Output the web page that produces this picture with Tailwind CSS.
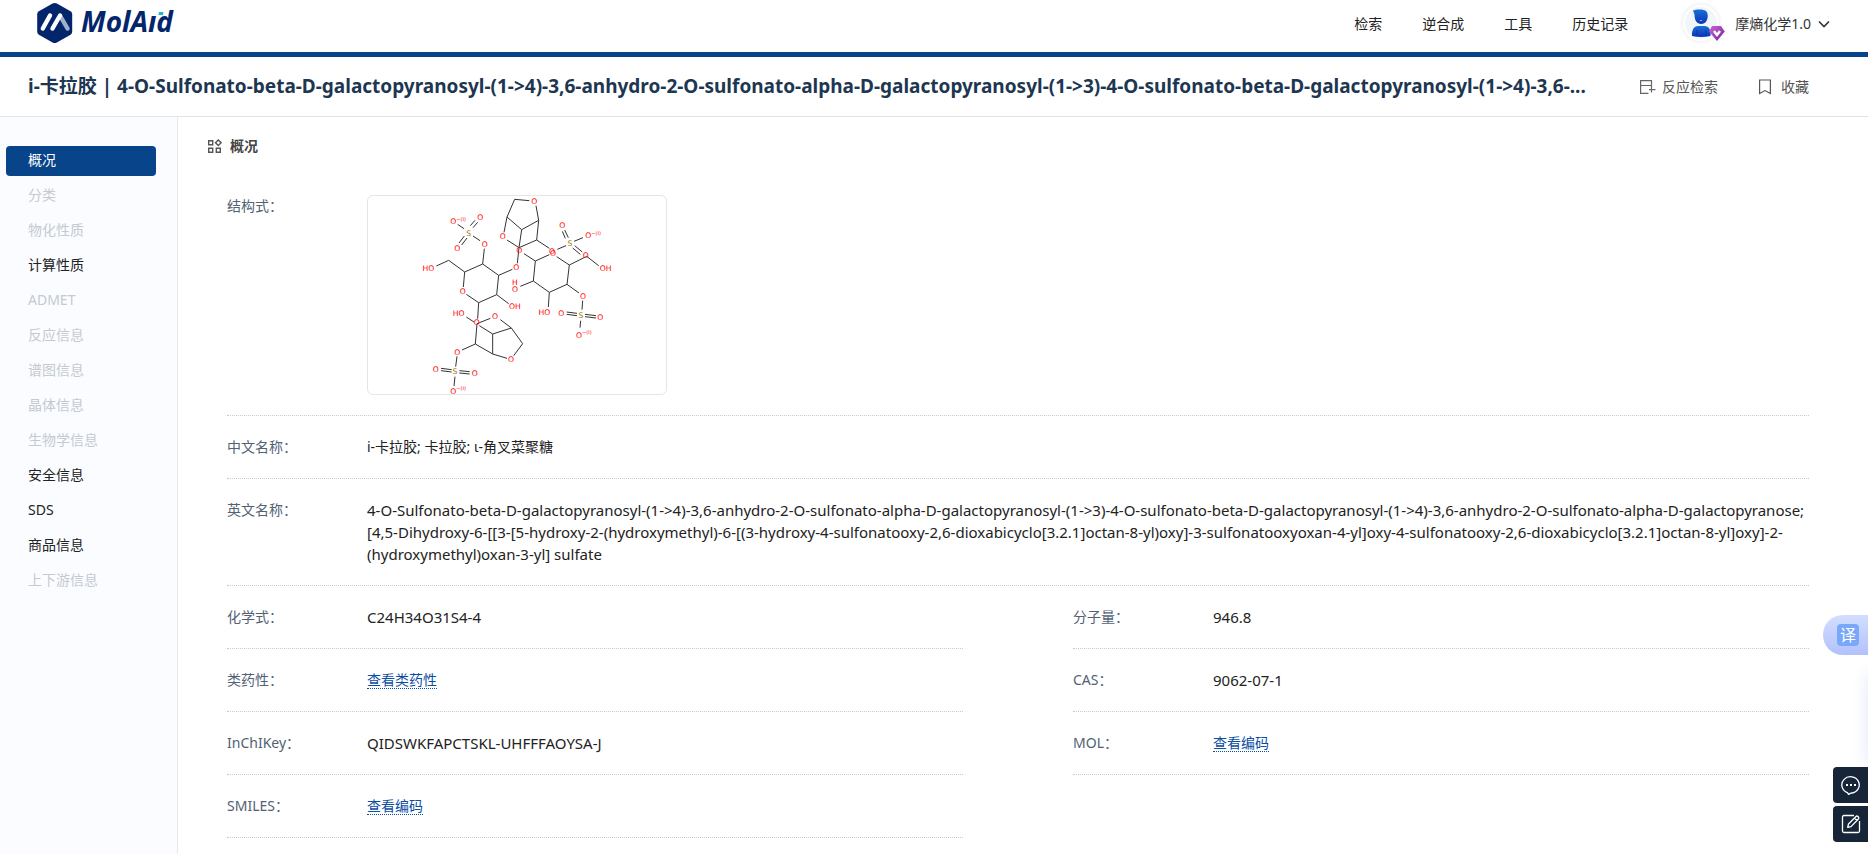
<!DOCTYPE html>
<html lang="zh-CN">
<head>
  <meta charset="UTF-8" />
  <meta name="viewport" content="width=device-width, initial-scale=1.0" />
  <title>i-卡拉胶 | MolAid</title>
  <script src="https://cdn.jsdelivr.net/npm/@tailwindcss/browser@4"></script>
</head>
<body class="min-h-screen flex flex-col overflow-x-hidden bg-white text-sm text-[#222] font-['Noto_Sans','Noto_Sans_CJK_SC',sans-serif]">

  <!-- top bar -->
  <header class="h-[57px] shrink-0 border-b-5 border-[#08448a] flex items-center justify-between pl-9 pr-[38px]">
    <a href="#" aria-label="MolAid" class="block self-start pt-[2px]">
      <svg width="150" height="42" viewBox="0 0 150 42">
        <path d="M16.5 1.6Q18.7.4 20.9 1.6L34.5 9.2Q36.2 10.2 36.2 12.2V29.8Q36.2 31.8 34.5 32.8L20.9 40.4Q18.7 41.6 16.5 40.4L2.9 32.8Q1.2 31.8 1.2 29.8V12.2Q1.2 10.2 2.9 9.2Z" fill="#03256c" />
        <path d="M24.5 14.500L31.5 26.500" stroke="#a3aecb" stroke-width="4.4" stroke-linecap="round" />
        <path d="M14 13.500L6.8 26.500M24 13.500L16.500 26.500" stroke="#fff" stroke-width="4.4" stroke-linecap="round" />
        <text x="45" y="30" font-family="Noto Sans, sans-serif" font-size="28" font-weight="700" font-style="italic" fill="#03256c">MolAıd</text>
        <path d="M123 10L127.500 10L126.900 13L122.400 13Z" fill="#19b5e8" />
      </svg>
    </a>
    <div class="flex items-center h-full pb-1">
      <nav class="flex items-center gap-10">
        <a href="#">检索</a>
        <a href="#">逆合成</a>
        <a href="#">工具</a>
        <a href="#">历史记录</a>
      </nav>
      <button type="button" class="ml-[53px] flex items-center text-[#333]">
        <svg width="44" height="44" viewBox="0 0 44 44" class="overflow-visible">
          <defs>
            <linearGradient id="man" x1="0" y1="0" x2="0" y2="1"><stop offset="0" stop-color="#1a6fd6" /><stop offset="1" stop-color="#0a33b8" /></linearGradient>
            <linearGradient id="gem" x1="0" y1="0" x2="1" y2="1"><stop offset="0" stop-color="#c26bd0" /><stop offset="1" stop-color="#7a1fa0" /></linearGradient>
            <radialGradient id="halo"><stop offset=".75" stop-color="#000" stop-opacity=".06" /><stop offset="1" stop-color="#000" stop-opacity="0" /></radialGradient>
          </defs>
          <circle cx="20" cy="21" r="22" fill="url(#halo)" />
          <circle cx="20" cy="21" r="18" fill="#fff" />
          <circle cx="20" cy="21" r="16" fill="#f1f6fb" />
          <path d="M12 8.500C14 7.500 23 6.500 25.500 9.500C28 12.500 27 22 20.500 22C15.500 22 13.500 18 13.500 12.500Z" fill="url(#man)" />
          <path d="M18.500 18Q20 19.500 21.500 18Z" fill="#fff" />
          <path d="M11 34C10.500 28 13 24 17 24H23.500C28 24 30 28 29.500 34Q20 36 11 34Z" fill="url(#man)" />
          <path d="M16 28V34M25 28V34" stroke="#0a2fa5" stroke-width=".8" />
          <path d="M31 24H40L43.800 29.500L36 39L28 29.500Z" fill="url(#gem)" />
          <path d="M33 29L36 33L39 29" fill="none" stroke="#fff" stroke-width="2.4" />
        </svg>
        <span class="ml-[10px]">摩熵化学1.0</span>
        <svg width="12" height="8" viewBox="0 0 12 8" class="ml-[7px]" fill="none" stroke="#333" stroke-width="1.6"><path d="M1 1.500L6 6.500L11 1.500" /></svg>
      </button>
    </div>
  </header>

  <!-- compound title -->
  <div class="h-[60px] shrink-0 border-b border-[#dde4ea] flex items-center justify-between pl-7 pr-[59px]">
    <h1 class="min-w-0 truncate text-[19px] font-bold text-[#1d3651]">i-卡拉胶 | 4-O-Sulfonato-beta-D-galactopyranosyl-(1-&gt;4)-3,6-anhydro-2-O-sulfonato-alpha-D-galactopyranosyl-(1-&gt;3)-4-O-sulfonato-beta-D-galactopyranosyl-(1-&gt;4)-3,6-...</h1>
    <div class="flex shrink-0 gap-10 ml-4 text-[#555]">
      <button type="button" class="flex items-center gap-[6px]">
        <svg width="17" height="16" viewBox="0 0 17 16" fill="none" stroke="#666" stroke-width="1.2"><path d="M12.500 6V1.600H1.600V14.400H9.500M1.600 6.500H12.500M12.500 1.600V9M12.500 8V13.500M10 10.700H16.500" /></svg>
        反应检索
      </button>
      <button type="button" class="flex items-center gap-[9px]">
        <svg width="14" height="16" viewBox="0 0 14 16" fill="none" stroke="#555" stroke-width="1.2"><path d="M1.600 1H12.400V14.600L7 11.600L1.600 14.600Z" /></svg>
        收藏
      </button>
    </div>
  </div>

  <div class="flex flex-1">
    <!-- side nav -->
    <aside class="w-[178px] shrink-0 border-r border-[#e6eaef] bg-[#fafcff] pt-[29px] pl-[6px] pr-[21px]">
      <nav class="flex flex-col gap-[7px] leading-7 text-[#c5cad1]">
        <a href="#" class="-mb-[2px] rounded bg-[#08448a] pl-[22px] pb-[2px] text-white">概况</a>
        <a href="#" class="pl-[22px]">分类</a>
        <a href="#" class="pl-[22px]">物化性质</a>
        <a href="#" class="pl-[22px] text-[#222]">计算性质</a>
        <a href="#" class="pl-[22px]">ADMET</a>
        <a href="#" class="pl-[22px]">反应信息</a>
        <a href="#" class="pl-[22px]">谱图信息</a>
        <a href="#" class="pl-[22px]">晶体信息</a>
        <a href="#" class="pl-[22px]">生物学信息</a>
        <a href="#" class="pl-[22px] text-[#222]">安全信息</a>
        <a href="#" class="pl-[22px] text-[#222]">SDS</a>
        <a href="#" class="pl-[22px] text-[#222]">商品信息</a>
        <a href="#" class="pl-[22px]">上下游信息</a>
      </nav>
    </aside>

    <main class="flex-1 min-w-0 pl-[29px] pr-[59px] leading-[22px]">
      <h2 class="h-[58px] flex items-center gap-2 font-semibold text-[#444]">
        <svg width="15" height="15" viewBox="0 0 15 15" fill="none" stroke="#555" stroke-width="1.4"><path d="M1.700 1.700H5.700V5.700H1.700ZM1.700 9.300H5.700V13.300H1.700ZM9.300 9.300H13.300V13.300H9.300ZM11.300.9L14.100 3.700L11.300 6.500L8.500 3.700Z" /></svg>
        概况
      </h2>

      <dl class="ml-5">
        <div class="flex py-5 border-b border-dotted border-[#c3ccd6]">
          <dt class="w-[140px] shrink-0 text-[#526273]">结构式：</dt>
          <dd class="rounded-md border border-[#e5e5e5]">
            <svg width="298" height="198" viewBox="24 33 894 594" class="overflow-visible" role="img" aria-label="结构式">
              <g fill="none" stroke="#333" stroke-width="3">
                <!-- left sulfate and pyranose -->
                <path d="M293 118L312 131M331 122L345 106M339 128L353 112M313 153L297 174M321 159L305 180M339 153L360 167M373 191L368 237" />
                <path d="M368 237L314 261L310 306M319 328L356 353L410 329L416 271L368 237M314 261L266 226L229 243M416 271L457 253M410 329L446 356M356 353L353 401" />
                <!-- lower bicycle and sulfate -->
                <path d="M319 396L342 411M358 422L398 447L454 429L421 404M391 400L351 416L346 477L398 507V447M454 429L488 476L461 512M441 520L398 507M346 477L306 495M291 514L287 545" />
                <path d="M243 550L275 554M243 557L275 561M298 557L329 560M298 564L329 567M285 575L282 603" />
                <!-- upper bicycle -->
                <path d="M508 47L464 43L441 96L432 142M441 96L485 134L536 106L528 62M536 106L530 165L568 190M441 165L477 188L530 165M485 134L477 188L472 235" />
                <!-- right pyranose -->
                <path d="M492 206L526 228L568 209M526 228L520 288L568 322L621 298L628 240L590 215M520 288L481 304M568 322L565 366M621 298L657 324M628 240L680 214L716 242" />
                <!-- right sulfates -->
                <path d="M592 193L618 182M642 169L669 158M607 139L616 160M614 135L625 158M638 189L661 208M644 182L667 201M668 347L666 374M620 381L651 385M620 388L651 392M675 388L708 392M675 395L708 399M662 407L660 428" />
              </g>
              <g font-family="DejaVu Sans, sans-serif" font-size="23" fill="#f00" text-anchor="middle">
                <text x="361" y="105">O</text>
                <text x="292" y="199">O</text>
                <text x="374" y="186">O</text>
                <text x="205" y="258">HO</text>
                <text x="308" y="328">O</text>
                <text x="469" y="255">O</text>
                <text x="465" y="373">OH</text>
                <text x="296" y="392">HO</text>
                <text x="350" y="420">O</text>
                <text x="405" y="402">O</text>
                <text x="453" y="532">O</text>
                <text x="292" y="509">O</text>
                <text x="227" y="561">O</text>
                <text x="344" y="574">O</text>
                <text x="523" y="57">O</text>
                <text x="428" y="163">O</text>
                <text x="478" y="204">O</text>
                <text x="576" y="208">O</text>
                <text x="579" y="213">O</text>
                <text x="607" y="130">O</text>
                <text x="677" y="220">O</text>
                <text x="737" y="259">OH</text>
                <text x="465" y="300">H</text>
                <text x="465" y="321">O</text>
                <text x="553" y="390">HO</text>
                <text x="669" y="341">O</text>
                <text x="604" y="393">O</text>
                <text x="721" y="406">O</text>
                <g text-anchor="start">
                  <text x="271" y="118">O<tspan dy="-11" font-size="15">−(I)</tspan></text>
                  <text x="271" y="627">O<tspan dy="-11" font-size="15">−(I)</tspan></text>
                  <text x="676" y="160">O<tspan dy="-11" font-size="15">−(I)</tspan></text>
                  <text x="648" y="459">O<tspan dy="-11" font-size="15">−(I)</tspan></text>
                </g>
                <g fill="#9c7a10">
                  <text x="326" y="153">S</text>
                  <text x="285" y="568">S</text>
                  <text x="630" y="184">S</text>
                  <text x="663" y="400">S</text>
                </g>
              </g>
            </svg>
          </dd>
        </div>
        <div class="flex py-5 border-b border-dotted border-[#c3ccd6]">
          <dt class="w-[140px] shrink-0 text-[#526273]">中文名称：</dt>
          <dd>i-卡拉胶; 卡拉胶; ι-角叉菜聚糖</dd>
        </div>
        <div class="flex py-5 border-b border-dotted border-[#c3ccd6]">
          <dt class="w-[140px] shrink-0 text-[#526273]">英文名称：</dt>
          <dd class="text-[15px] leading-[22px]">4-O-Sulfonato-beta-D-galactopyranosyl-(1-&gt;4)-3,6-anhydro-2-O-sulfonato-alpha-D-galactopyranosyl-(1-&gt;3)-4-O-sulfonato-beta-D-galactopyranosyl-(1-&gt;4)-3,6-anhydro-2-O-sulfonato-alpha-D-galactopyranose; [4,5-Dihydroxy-6-[[3-[5-hydroxy-2-(hydroxymethyl)-6-[(3-hydroxy-4-sulfonatooxy-2,6-dioxabicyclo[3.2.1]octan-8-yl)oxy]-3-sulfonatooxyoxan-4-yl]oxy-4-sulfonatooxy-2,6-dioxabicyclo[3.2.1]octan-8-yl]oxy]-2-(hydroxymethyl)oxan-3-yl] sulfate</dd>
        </div>
      </dl>

      <div class="ml-5 grid grid-cols-2 gap-x-[110px] items-start">
        <dl>
          <div class="flex py-5 border-b border-dotted border-[#c3ccd6]">
            <dt class="w-[140px] shrink-0 text-[#526273]">化学式：</dt>
            <dd class="text-[15px] leading-[22px]">C24H34O31S4-4</dd>
          </div>
          <div class="flex py-5 border-b border-dotted border-[#c3ccd6]">
            <dt class="w-[140px] shrink-0 text-[#526273]">类药性：</dt>
            <dd><a href="#" class="inline-block leading-4 border-b border-dotted border-[#0b4ea2] text-[#0b4ea2]">查看类药性</a></dd>
          </div>
          <div class="flex py-5 border-b border-dotted border-[#c3ccd6]">
            <dt class="w-[140px] shrink-0 text-[#526273]">InChIKey：</dt>
            <dd class="text-[15px] leading-[22px]">QIDSWKFAPCTSKL-UHFFFAOYSA-J</dd>
          </div>
          <div class="flex py-5 border-b border-dotted border-[#c3ccd6]">
            <dt class="w-[140px] shrink-0 text-[#526273]">SMILES：</dt>
            <dd><a href="#" class="inline-block leading-4 border-b border-dotted border-[#0b4ea2] text-[#0b4ea2]">查看编码</a></dd>
          </div>
        </dl>
        <dl>
          <div class="flex py-5 border-b border-dotted border-[#c3ccd6]">
            <dt class="w-[140px] shrink-0 text-[#526273]">分子量：</dt>
            <dd class="text-[15px] leading-[22px]">946.8</dd>
          </div>
          <div class="flex py-5 border-b border-dotted border-[#c3ccd6]">
            <dt class="w-[140px] shrink-0 text-[#526273]">CAS：</dt>
            <dd class="text-[15px] leading-[22px]">9062-07-1</dd>
          </div>
          <div class="flex py-5 border-b border-dotted border-[#c3ccd6]">
            <dt class="w-[140px] shrink-0 text-[#526273]">MOL：</dt>
            <dd><a href="#" class="inline-block leading-4 border-b border-dotted border-[#0b4ea2] text-[#0b4ea2]">查看编码</a></dd>
          </div>
        </dl>
      </div>
    </main>
  </div>

  <!-- floating tools -->
  <button type="button" class="fixed right-0 bottom-[199px] w-[45px] h-10 flex items-center pl-[14px] rounded-l-full bg-gradient-to-b from-[#d2deff] to-[#b3c1fb]" aria-label="翻译">
    <span class="size-[22px] rounded bg-[#79a8fb] text-white text-base leading-[22px] text-center">译</span>
  </button>
  <div class="fixed left-full bottom-[90px] w-10 h-[90px] shadow-[0_0_16px_rgba(60,90,220,0.15)]"></div>
  <div class="fixed right-0 bottom-3 flex flex-col gap-[3px]">
    <button type="button" aria-label="在线咨询" class="w-[35px] h-9 flex items-center justify-center rounded-l bg-[#172538]">
      <svg width="20" height="20" viewBox="0 0 20 20" fill="none" stroke="#fff" stroke-width="1.3"><path d="M6.500 17.600A8.700 8.200 0 1 1 10 18.100L7.500 19.400Z" stroke-linejoin="round" /><path d="M5 10H7M9 10H11M13 10H15" stroke-width="2" /></svg>
    </button>
    <button type="button" aria-label="意见反馈" class="w-[35px] h-9 flex items-center justify-center rounded-l bg-[#172538]">
      <svg width="20" height="20" viewBox="0 0 20 20" fill="none" stroke="#fff" stroke-width="1.3" stroke-linejoin="round"><path d="M13 1.500H3Q1.500 1.500 1.500 3V17Q1.500 18.500 3 18.500H17Q18.500 18.500 18.500 17V7" /><path d="M7.500 10L15 2.500Q16 1.500 17.200 2.700Q18.400 3.900 17.400 5L10 12.600L6.700 13.400ZM13.500 4L16 6.500" /></svg>
    </button>
  </div>
</body>
</html>
